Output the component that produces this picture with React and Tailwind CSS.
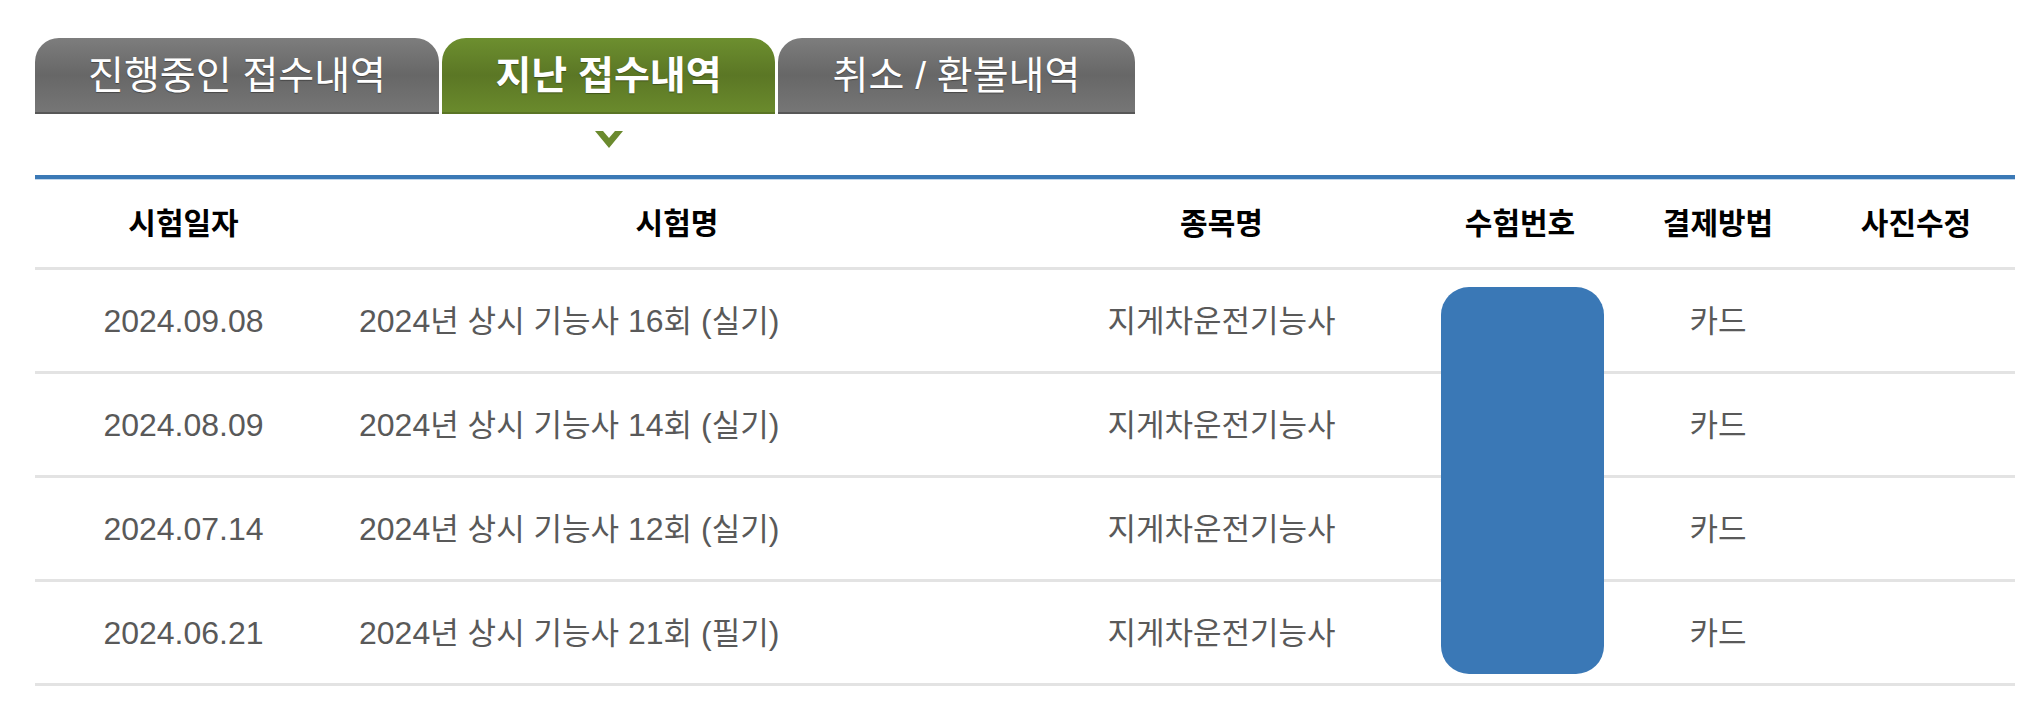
import React from "react";

const tabs = [
  { id: 1, name: "진행중인 접수내역", selected: false, width: "w-[404px]" },
  { id: 2, name: "지난 접수내역", selected: true, width: "w-[333px]" },
  { id: 3, name: "취소 / 환불내역", selected: false, width: "w-[357px]" },
];

const columns = [
  { key: "date", title: "시험일자", width: "w-[297px]", align: "justify-center" },
  { key: "exam", title: "시험명", width: "w-[690px]", align: "justify-start pl-[27px]" },
  { key: "subject", title: "종목명", width: "w-[399px]", align: "justify-center" },
  { key: "number", title: "수험번호", width: "w-[198px]", align: "justify-center" },
  { key: "payment", title: "결제방법", width: "w-[198px]", align: "justify-center" },
  { key: "photo", title: "사진수정", width: "w-[198px]", align: "justify-center" },
];

const rows = [
  { id: 1, date: "2024.09.08", exam: "2024년 상시 기능사 16회 (실기)", subject: "지게차운전기능사", number: "", payment: "카드", photo: "" },
  { id: 2, date: "2024.08.09", exam: "2024년 상시 기능사 14회 (실기)", subject: "지게차운전기능사", number: "", payment: "카드", photo: "" },
  { id: 3, date: "2024.07.14", exam: "2024년 상시 기능사 12회 (실기)", subject: "지게차운전기능사", number: "", payment: "카드", photo: "" },
  { id: 4, date: "2024.06.21", exam: "2024년 상시 기능사 21회 (필기)", subject: "지게차운전기능사", number: "", payment: "카드", photo: "" },
];

const Mixed = ({ text }) => (
  <span className="whitespace-pre">
    {text.split(/([\uAC00-\uD7A3]+)/).map((part, i) =>
      /[\uAC00-\uD7A3]/.test(part) ? (
        <span key={i} className="text-[31px]">{part}</span>
      ) : (
        part
      )
    )}
  </span>
);

const App = () => {
  return (
    <div className="min-h-screen bg-white pt-[38px] pl-[35px] font-['Liberation_Sans','Noto_Sans_CJK_KR',sans-serif]">
      <div className="w-[1980px]">
        <div className="flex gap-[3px] h-[76px]">
          {tabs.map(tab => (
            <div
              key={tab.id}
              className={`${tab.width} h-full rounded-t-[24px] flex items-center justify-center text-white text-[39px] leading-none border-b-2 [text-shadow:0_1px_1px_rgba(0,0,0,0.35)] ${
                tab.selected
                  ? "font-bold bg-linear-to-b from-[#6d8f2f] via-[#5b7725] to-[#6a8a2c] border-[#5a7524]"
                  : "font-normal bg-linear-to-b from-[#7d7d7d] via-[#676767] to-[#767676] border-[#575757]"
              }`}
            >
              {tab.name}
            </div>
          ))}
        </div>

        <div className="flex gap-[3px] h-[61px] pt-[17px]">
          <div className="w-[404px]" />
          <div className="w-[333px] flex justify-center">
            <svg width="28" height="17" viewBox="0 0 28 17">
              <polygon points="0,0 8,0 14,7 20,0 28,0 14,17" fill="#6b8a2e" />
            </svg>
          </div>
        </div>

        <div className="h-[5px] bg-[#3b79b6] border-b border-[#c2d7ec]" />

        <div className="flex h-[90px] border-b-[3px] border-[#e3e3e3]">
          {columns.map(col => (
            <div
              key={col.key}
              className={`${col.width} flex items-center justify-center text-[30px] font-bold text-black leading-none`}
            >
              {col.title}
            </div>
          ))}
        </div>

        {rows.map((row, index) => (
          <div key={row.id} className="flex h-[104px] border-b-[3px] border-[#e3e3e3]">
            {columns.map(col => (
              <div
                key={col.key}
                className={`${col.width} ${col.align} relative flex items-center text-[32px] text-[#595959] leading-none`}
              >
                <Mixed text={row[col.key]} />
                {col.key === "number" && index === 0 && (
                  <div className="absolute top-[17px] left-[20px] w-[163px] h-[387px] rounded-[28px] bg-[#3a78b6] z-10" />
                )}
              </div>
            ))}
          </div>
        ))}
      </div>
    </div>
  );
};

export default App;
